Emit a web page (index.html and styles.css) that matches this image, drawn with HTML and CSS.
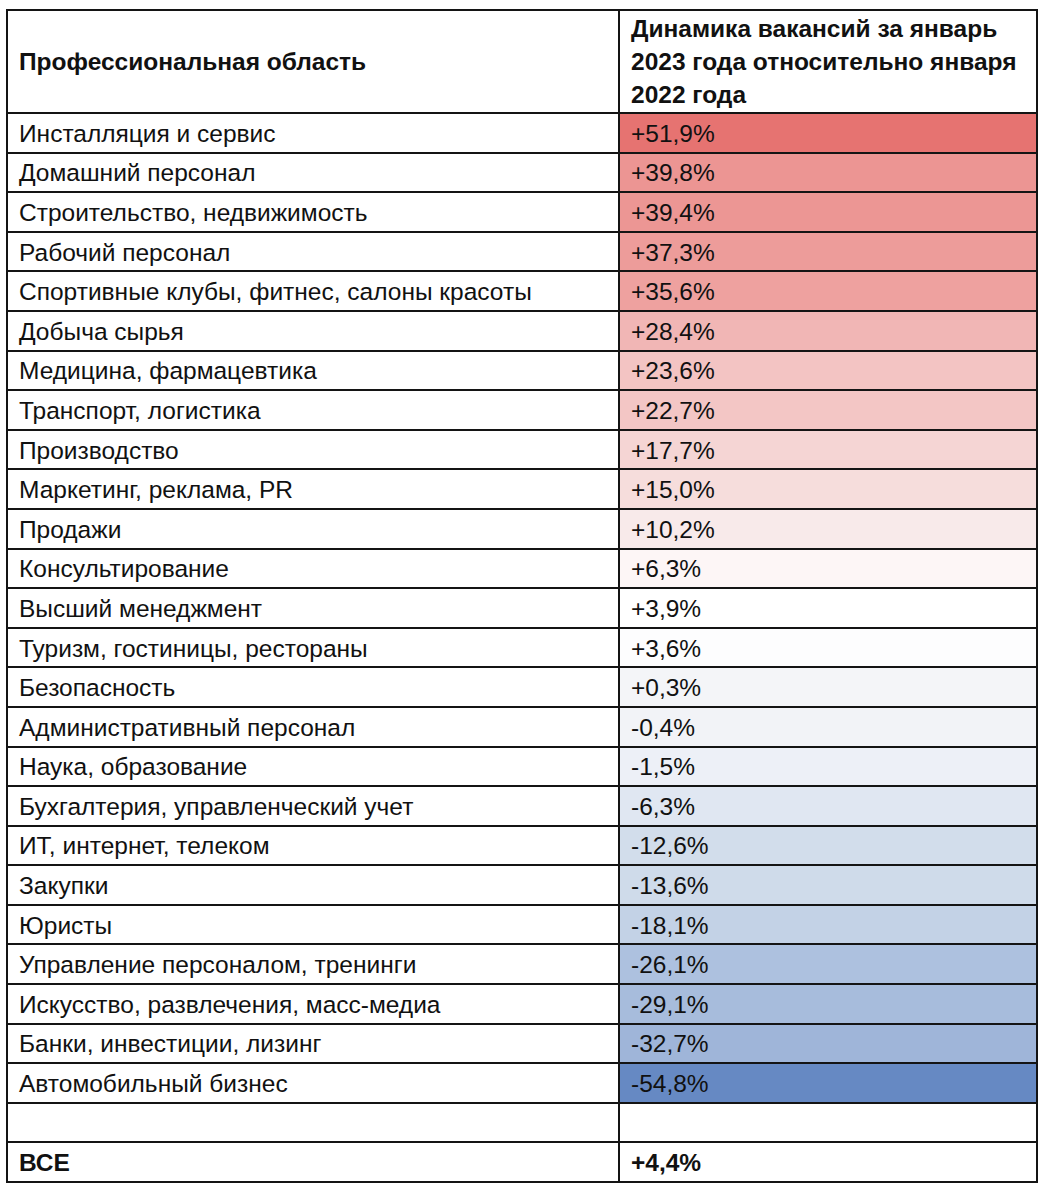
FILE: index.html
```html
<!DOCTYPE html>
<html lang="ru">
<head>
<meta charset="utf-8">
<link rel="stylesheet" href="styles.css">
</head>
<body>
<table class="grid">
  <thead>
    <tr>
      <th class="col-area">Профессиональная область</th>
      <th class="col-val">Динамика вакансий за январь 2023 года относительно января 2022 года</th>
    </tr>
  </thead>
  <tbody>
    <tr><td>Инсталляция и сервис</td><td style="background:rgb(230,115,113)">+51,9%</td></tr>
    <tr><td>Домашний персонал</td><td style="background:rgb(236,149,147)">+39,8%</td></tr>
    <tr><td>Строительство, недвижимость</td><td style="background:rgb(236,150,148)">+39,4%</td></tr>
    <tr><td>Рабочий персонал</td><td style="background:rgb(237,156,154)">+37,3%</td></tr>
    <tr><td>Спортивные клубы, фитнес, салоны красоты</td><td style="background:rgb(238,161,159)">+35,6%</td></tr>
    <tr><td>Добыча сырья</td><td style="background:rgb(241,182,181)">+28,4%</td></tr>
    <tr><td>Медицина, фармацевтика</td><td style="background:rgb(243,196,195)">+23,6%</td></tr>
    <tr><td>Транспорт, логистика</td><td style="background:rgb(243,198,197)">+22,7%</td></tr>
    <tr><td>Производство</td><td style="background:rgb(245,213,212)">+17,7%</td></tr>
    <tr><td>Маркетинг, реклама, PR</td><td style="background:rgb(246,221,220)">+15,0%</td></tr>
    <tr><td>Продажи</td><td style="background:rgb(248,234,234)">+10,2%</td></tr>
    <tr><td>Консультирование</td><td style="background:rgb(253,246,246)">+6,3%</td></tr>
    <tr><td>Высший менеджмент</td><td style="background:rgb(255,255,255)">+3,9%</td></tr>
    <tr><td>Туризм, гостиницы, рестораны</td><td style="background:rgb(253,253,254)">+3,6%</td></tr>
    <tr><td>Безопасность</td><td style="background:rgb(244,245,248)">+0,3%</td></tr>
    <tr><td>Административный персонал</td><td style="background:rgb(242,243,247)">-0,4%</td></tr>
    <tr><td>Наука, образование</td><td style="background:rgb(237,240,247)">-1,5%</td></tr>
    <tr><td>Бухгалтерия, управленческий учет</td><td style="background:rgb(224,231,242)">-6,3%</td></tr>
    <tr><td>ИТ, интернет, телеком</td><td style="background:rgb(210,221,235)">-12,6%</td></tr>
    <tr><td>Закупки</td><td style="background:rgb(207,219,234)">-13,6%</td></tr>
    <tr><td>Юристы</td><td style="background:rgb(195,210,230)">-18,1%</td></tr>
    <tr><td>Управление персоналом, тренинги</td><td style="background:rgb(173,193,223)">-26,1%</td></tr>
    <tr><td>Искусство, развлечения, масс-медиа</td><td style="background:rgb(167,188,220)">-29,1%</td></tr>
    <tr><td>Банки, инвестиции, лизинг</td><td style="background:rgb(159,181,217)">-32,7%</td></tr>
    <tr><td>Автомобильный бизнес</td><td style="background:rgb(102,137,195)">-54,8%</td></tr>
    <tr><td></td><td></td></tr>
    <tr class="total"><td>ВСЕ</td><td>+4,4%</td></tr>
  </tbody>
</table>
</body>
</html>
```

FILE: styles.css
```css
html, body {
  margin: 0;
  padding: 0;
  background: #ffffff;
}

body {
  padding: 9px 0 0 6px;
  font-family: "Liberation Sans", Arial, sans-serif;
  color: #111;
}

.grid {
  border-collapse: collapse;
  width: 1032px;
  table-layout: fixed;
}

.grid th,
.grid td {
  border: 2px solid #141414;
  padding: 0 11px;
  font-size: 24.5px;
  text-align: left;
  vertical-align: middle;
}

.grid th {
  font-weight: bold;
  line-height: 33px;
  height: 101px;
}

.col-area {
  width: 588px;
}

.grid td {
  height: 35.6px;
  line-height: 26px;
  padding-top: 2px;
}

.total td {
  font-weight: bold;
}
```
